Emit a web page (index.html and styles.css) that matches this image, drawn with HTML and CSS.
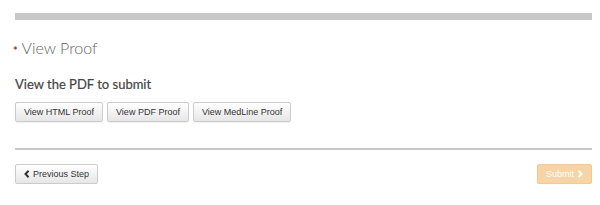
FILE: index.html
```html
<!DOCTYPE html>
<html lang="en">
<head>
    <meta charset="UTF-8">
    <meta name="viewport" content="width=device-width, initial-scale=1.0">
    <title>View Proof</title>
    <link rel="stylesheet" href="styles.css">
</head>
<body>
    <div class="main">
        <div class="progress"></div>
        <h2 class="step-title"><span class="req">*</span> View Proof</h2>
        <h3 class="sub-title">View the PDF to submit</h3>
        <div class="proof-buttons">
            <button class="btn">View HTML Proof</button>
            <button class="btn">View PDF Proof</button>
            <button class="btn">View MedLine Proof</button>
        </div>
        <hr class="divider">
        <div class="nav-row">
            <button class="btn">
                <svg class="chev" width="6" height="8" viewBox="0 0 6 8"><polyline points="4.6,0.8 1.5,4 4.6,7.2" fill="none" stroke="currentColor" stroke-width="2"/></svg>
                Previous Step
            </button>
            <button class="btn btn-submit" disabled>
                Submit
                <svg class="chev" width="6" height="8" viewBox="0 0 6 8"><polyline points="1.4,0.8 4.5,4 1.4,7.2" fill="none" stroke="currentColor" stroke-width="2"/></svg>
            </button>
        </div>
    </div>
</body>
</html>
```

FILE: styles.css
```css
* {
    box-sizing: border-box;
    margin: 0;
    padding: 0;
}
body {
    font-family: Lato, "Open Sans", Arial, sans-serif;
    background-color: #fff;
    color: #555;
}
.main {
    width: 577px;
    margin-left: 15px;
    padding-top: 13px;
}
.progress {
    height: 7px;
    background-color: #c8c8c8;
}
.step-title {
    font-weight: 300;
    font-size: 16px;
    color: #666;
    margin-top: 18px;
    line-height: 20px;
}
.req {
    color: #8a3b1c;
    font-size: 11px;
    font-weight: 700;
    vertical-align: -1px;
    margin-left: -2px;
}
.sub-title {
    font-size: 13px;
    font-weight: 400;
    color: #444;
    margin-top: 15px;
    line-height: 16px;
    -webkit-text-stroke: 0.2px #444;
}
.proof-buttons {
    display: flex;
    gap: 4px;
    margin-top: 10px;
}
.btn {
    font-family: "Liberation Sans", Arial, sans-serif;
    font-size: 9px;
    color: #333;
    height: 20px;
    padding: 0 8px;
    border: 1px solid #ccc;
    border-radius: 2px;
    background: linear-gradient(#fff, #e6e6e6);
    box-shadow: 0 1px 1px rgba(0,0,0,0.06);
    cursor: pointer;
    display: flex;
    align-items: center;
    gap: 3px;
}
.chev {
    display: block;
}
.divider {
    border: none;
    height: 2px;
    background-color: #c8c8c8;
    margin-top: 26px;
}
.nav-row {
    display: flex;
    justify-content: space-between;
    margin-top: 14px;
}
.btn-submit {
    background: #f6d4a6;
    border-color: #f2c994;
    color: #fff;
    cursor: default;
}
```
